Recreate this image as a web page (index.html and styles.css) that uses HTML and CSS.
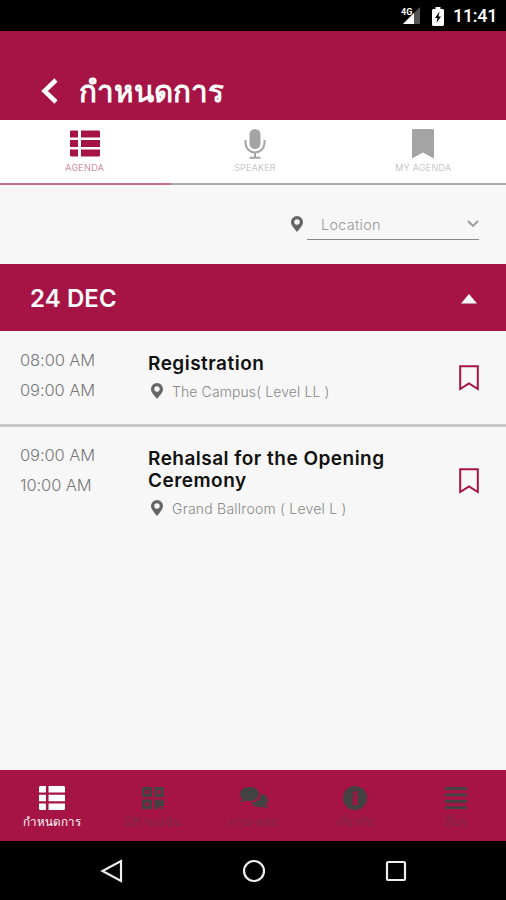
FILE: index.html
```html
<!DOCTYPE html>
<html lang="th">
<head>
<meta charset="utf-8">
<title>กำหนดการ</title>
<link rel="stylesheet" href="styles.css">
</head>
<body>
<svg class="defs" width="0" height="0">
  <symbol id="list" viewBox="0 0 30 26"><path d="M1 0H8V7H0V1ZM11 0H29L30 1V7H11ZM0 9.5H8V16.5H0ZM11 9.5H30V16.5H11ZM0 19H8V26H1L0 25ZM11 19H30V25L29 26H11Z"/></symbol>
  <symbol id="pin" viewBox="0 0 12 16"><path fill-rule="evenodd" d="M6 0a6 6 0 0 1 6 6c0 3-2 5-6 10C2 11 0 9 0 6a6 6 0 0 1 6-6Zm0 3.3a2.7 2.7 0 1 0 0 5.4 2.7 2.7 0 0 0 0-5.4Z"/></symbol>
  <symbol id="save" viewBox="0 0 20 26"><path d="M1.2 1.2H18.8V24L10 18.5 1.2 24Z" fill="none" stroke="#a61445" stroke-width="2"/></symbol>
</svg>
<main class="phone">
  <div class="status">
    <svg class="signal" width="23" height="20" viewBox="0 0 23 20"><path d="M21 1V18H4Z" fill="#555"/><path d="M15 7V18H4Z" fill="#fff"/></svg>
    <span class="network">4G</span>
    <svg class="battery" width="12" height="19" viewBox="0 0 12 19"><path d="M3.5 0h5v2H11l1 1v15l-1 1H1l-1-1V3l1-1h2.500Z" fill="#fff"/><path d="M7.500 4.500 3 11h2.500L4.500 16 9 9.500H6.500Z" fill="#000"/></svg>
    <span class="clock">11:41</span>
  </div>
  <header class="header">
    <svg width="18" height="26" viewBox="0 0 18 26"><path d="M16 2 4.500 13 16 24" fill="none" stroke="#fff" stroke-width="4.500"/></svg>
    <h1>กำหนดการ</h1>
  </header>
  <nav class="tabs">
    <div class="tab active"><svg width="30" height="27"><use href="#list"/></svg><span class="t1">AGENDA</span></div>
    <div class="tab"><svg width="22" height="30" viewBox="0 0 22 30"><rect x="5.500" y="0" width="11" height="20" rx="5.500" fill="#a4a4a4"/><path d="M1.500 11v3a9.500 9.500 0 0 0 19 0v-3M11 23.500V29M5.500 28.700h11" fill="none" stroke="#a4a4a4" stroke-width="2"/></svg><span class="t2">SPEAKER</span></div>
    <div class="tab"><svg width="22" height="30" viewBox="0 0 22 30"><path d="M1 0H21L22 1V29.500L11 23.500 0 29.500V1Z" fill="#a4a4a4"/></svg><span class="t3">MY AGENDA</span></div>
  </nav>
  <div class="filter">
    <svg class="pin" width="12" height="16"><use href="#pin"/></svg>
    <div class="select"><span>Location</span><svg width="12" height="8" viewBox="0 0 12 8"><path d="M1 1 6 6 11 1" fill="none" stroke="#999" stroke-width="1.900"/></svg></div>
  </div>
  <section class="day"><h2>24 DEC</h2><svg width="16" height="10" viewBox="0 0 16 10"><path d="M8 0 16 9.500H0Z" fill="#fff"/></svg></section>
  <article class="event">
    <div class="times"><span>08:00 AM</span><span>09:00 AM</span></div>
    <div class="info"><h3>Registration</h3><p><svg class="pin" width="12" height="16"><use href="#pin"/></svg><span class="p1">The Campus( Level LL )</span></p></div>
    <svg class="save" width="20" height="26"><use href="#save"/></svg>
  </article>
  <article class="event second">
    <div class="times"><span>09:00 AM</span><span class="ten">10:00 AM</span></div>
    <div class="info"><h3>Rehalsal for the Opening<br>Ceremony</h3><p><svg class="pin" width="12" height="16"><use href="#pin"/></svg><span class="p2">Grand Ballroom ( Level L )</span></p></div>
    <svg class="save" width="20" height="26"><use href="#save"/></svg>
  </article>
  <nav class="bottom">
    <div class="item active"><svg width="26" height="24" viewBox="0 0 30 26" preserveAspectRatio="none"><use href="#list" width="30" height="26"/></svg><span>กำหนดการ</span></div>
    <div class="item"><svg width="22" height="24" viewBox="0 0 22 24"><path fill-rule="evenodd" d="M0 1h10v10H0Zm3 3v4h4V4ZM12.500 1h9.500v10h-9.500Zm3 3v4h3.500V4ZM0 13.500h10V23H0Zm3 3V20h4v-3.500ZM12.500 13.500h4l2 2 1-2H22V20h-4l-2.500 3h-3Z"/><path d="M19 21h3v2h-3Z"/></svg><span>QR ของฉัน</span></div>
    <div class="item"><svg width="28" height="24" viewBox="0 0 28 24"><path d="M9.500 1c5.500 0 9.500 3 9.500 7s-4 7-9.500 7c-1.500 0-2.800-.2-4-.6C4 15.500 2 16 0 16c1.200-1 2-2.500 2.200-3.500C.8 11.200 0 9.700 0 8c0-4 4-7 9.500-7Z"/><path d="M21 8c4 .5 7 3 7 6.500 0 1.700-.7 3-1.800 4 .3 1.500 1 2.800 1.800 3.500-2 0-4-.5-5.500-1.300-5 1-9.500-.5-11.500-4C16.500 16.500 21 13 21 8Z"/></svg><span>ถาม-ตอบ</span></div>
    <div class="item"><svg width="24" height="24" viewBox="0 0 24 24"><circle cx="12" cy="12" r="12"/><path d="M10 5.500h4.500v3H10ZM10 9.500h4.500V19H10Z" fill="#a61445"/></svg><span>เกี่ยวกับ</span></div>
    <div class="item"><svg width="22" height="24" viewBox="0 0 22 24"><path d="M0 1h22v3H0ZM0 7.500h22v2.700H0ZM0 14h22v2.700H0ZM0 20.300h22V23H0Z"/></svg><span>อื่นๆ</span></div>
  </nav>
  <footer class="system">
    <svg width="24" height="24" viewBox="0 0 24 24"><path d="M21 2V22L2.500 12Z"/></svg>
    <svg width="24" height="24" viewBox="0 0 24 24"><circle cx="12" cy="12" r="10"/></svg>
    <svg width="24" height="24" viewBox="0 0 24 24"><rect x="3" y="3" width="18" height="18" rx="1"/></svg>
  </footer>
</main>
</body>
</html>
```
FILE: styles.css
```css
* { box-sizing: border-box; }
body { margin: 0; font-family: Inter, "Noto Sans", "Liberation Sans", sans-serif; background: #f7f7f7; }
h1, h2, h3, p { margin: 0; }
svg { display: block; flex: none; }
span { white-space: nowrap; }
.defs { position: absolute; }
.phone { width: 506px; height: 900px; display: flex; flex-direction: column; overflow: hidden; }
.status { height: 31px; flex: none; background: #000; color: #fff; display: flex; align-items: center; justify-content: flex-end; padding: 1px 10px 0 0; position: relative; }
.signal { margin-right: 10px; }
.network { position: absolute; left: 401px; top: 7px; font: 700 9px/10px Roboto, sans-serif; }
.battery { margin-right: 9px; }
.clock { font: 500 18px/20px Roboto, sans-serif; width: 43px; letter-spacing: -.3px; }
.header { height: 89px; flex: none; background: #a61445; color: #fff; display: flex; align-items: center; padding: 30px 0 0 40px; }
.header h1 { font-size: 29.600px; line-height: 36px; font-weight: 700; margin-left: 21px; }
.tabs { height: 65px; flex: none; display: flex; background: #fff; border-bottom: 2px solid #aaa; position: relative; }
.tabs::after { content: ""; position: absolute; left: 0; bottom: -2px; width: 171px; height: 2px; background: #c7708c; }
.tab { width: 169px; display: flex; flex-direction: column; align-items: center; padding: 9px 0 0 3px; color: #b5b5b5; }
.tab.active { width: 170px; padding-left: 0; color: #c2678a; fill: #a61445; }
.tab svg { height: 30px; }
.tab.active svg { height: 27px; margin: 1px 0 2px; }
.tab span { font-size: 9px; line-height: 12px; margin-top: 3px; font-weight: 300; letter-spacing: .3px; }
.filter { height: 79px; flex: none; display: flex; align-items: flex-start; justify-content: flex-end; padding: 26px 27px 0 0; }
.pin { fill: #666; }
.filter .pin { margin: 5px 4px 0 0; }
.select { width: 172px; height: 29px; border-bottom: 1px solid #888; display: flex; justify-content: space-between; align-items: center; padding: 0 0 2px 14px; font-size: 14.500px; color: #999; font-weight: 300; letter-spacing: .25px; }
.day { height: 67px; flex: none; background: #a61445; color: #fff; display: flex; align-items: center; justify-content: space-between; padding: 2px 29px 0 30px; }
.day h2 { font-size: 24px; line-height: 30px; font-weight: 600; letter-spacing: .1px; }
.event { height: 96px; flex: none; display: flex; border-bottom: 3px solid #c9c9c9; padding: 14px 27px 0 20px; }
.times { width: 128px; font-size: 16.500px; line-height: 30px; font-weight: 300; color: #777; display: flex; flex-direction: column; align-items: flex-start; letter-spacing: -.1px; }
.info { flex: 1; padding-top: 8px; }
.info h3 { font-size: 19px; line-height: 22px; font-weight: 600; color: #111; letter-spacing: .48px; }
.info p { display: flex; align-items: center; margin-top: 7px; padding-left: 3px; height: 18px; font-size: 14px; font-weight: 300; color: #888; gap: 9px; letter-spacing: .1px; }
.info .p2 { letter-spacing: .23px; }
.save { margin-top: 20px; }
.event.second { height: 343px; border: 0; padding-top: 13px; }
.second .save { margin-top: 28px; }
.bottom { height: 71px; flex: none; background: #a61445; display: flex; padding: 0 0 0 1px; }
.item { width: 101.500px; padding-top: 16px; display: flex; flex-direction: column; align-items: center; color: #792843; fill: #424242; }
.item span { font-size: 11.600px; line-height: 16px; margin-top: 4px; }
.item.active { color: #fff; fill: #fff; }
.system { height: 59px; flex: none; background: #000; display: flex; justify-content: space-between; padding: 18px 98px 0 100px; }
.system svg { fill: none; stroke: #eee; stroke-width: 2.200; }
```
